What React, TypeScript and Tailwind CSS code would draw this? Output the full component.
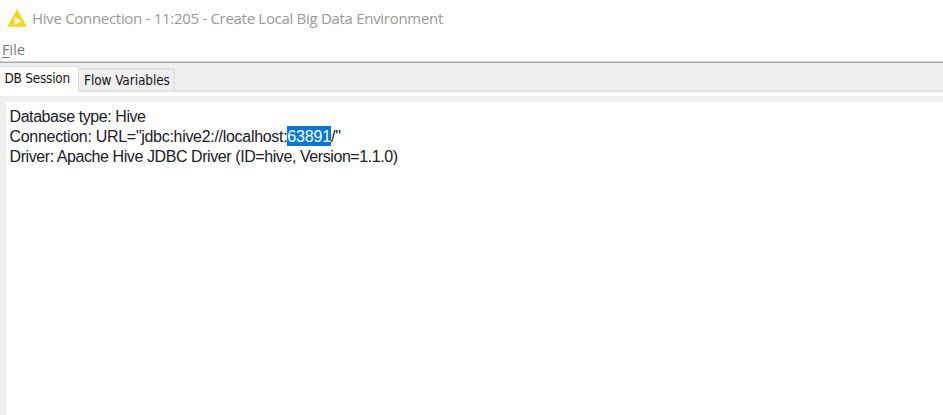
const LOG_FONT = "font-['Liberation_Sans',Arial,sans-serif]";
const TAB_FONT = "font-['DejaVu_Sans_Condensed','DejaVu_Sans',sans-serif]";
const UI_FONT = "font-['Open_Sans','Noto_Sans',sans-serif]";

function TitleBar() {
  return (
    <header className="flex h-[38px] items-start pl-[7px]">
      <svg className="mt-[9px] h-[18px] w-[20px] shrink-0" viewBox="0 0 20 18">
        <path d="M10 0.3 L19.8 17.8 H0.2 Z" fill="#fcd50b" />
        <path d="M7.5 8 L14.5 12.2 L7.5 16 Z" fill="#fff" />
      </svg>
      <h1 className={`${UI_FONT} ml-[5px] mt-[7px] whitespace-nowrap text-[15px] font-normal leading-[22px] tracking-[-0.3px] text-[#999]`}>
        Hive Connection - 11:205 - Create Local Big Data Environment
      </h1>
    </header>
  );
}

function MenuBar() {
  return (
    <nav className={`${UI_FONT} h-[23px] pl-[2px] text-[14px] leading-[24px] tracking-[0.2px] text-[#777]`}>
      <span className="underline decoration-1 underline-offset-2">F</span>ile
    </nav>
  );
}

function Tabs() {
  return (
    <div className={`${TAB_FONT} flex h-[29px] items-start bg-[#efefef] text-[13.5px] text-[#151520]`}>
      <button className="mt-[3px] h-[26px] w-[79px] whitespace-nowrap border-r border-t border-[#dcdcdc] bg-white pb-[3px] pl-[4.5px] text-left leading-[21px] tracking-[-0.25px]">
        DB Session
      </button>
      <div className="flex h-[29px] flex-1 items-end border-b-2 border-[#e2e2e2]">
        <button className="h-[22px] w-[96px] whitespace-nowrap border-r-2 border-t-2 border-[#e2e2e2] pl-[5px] pt-[1px] text-left leading-[19px] tracking-[-0.08px]">
          Flow Variables
        </button>
      </div>
    </div>
  );
}

export default function App() {
  return (
    <main className="flex h-[415px] w-[943px] flex-col overflow-hidden bg-white">
      <TitleBar />
      <MenuBar />
      <div className="h-[2px] border-b border-t border-b-[#a5a5a5] border-t-[#d8d8d8]" />
      <Tabs />
      <section className="mt-[4px] flex-1 border-l-[6px] border-t-[6px] border-[#efefef] bg-white">
        <div className={`${LOG_FONT} whitespace-nowrap pl-[3.5px] pt-[5px] text-[16px] leading-[20px] text-[#202028]`}>
          <p className="tracking-[-0.42px]">Database type: Hive</p>
          <p className="flex h-[20px] items-start tracking-[-0.3px]">
            Connection: URL="jdbc:hive2://localhost:
            <span className="-mt-px h-[20px] bg-[#0878d8] pt-px tracking-[-0.15px] text-white">63891</span>/"
          </p>
          <p className="tracking-[-0.42px]">Driver: Apache Hive JDBC Driver (ID=hive, Version=1.1.0)</p>
        </div>
      </section>
    </main>
  );
}
